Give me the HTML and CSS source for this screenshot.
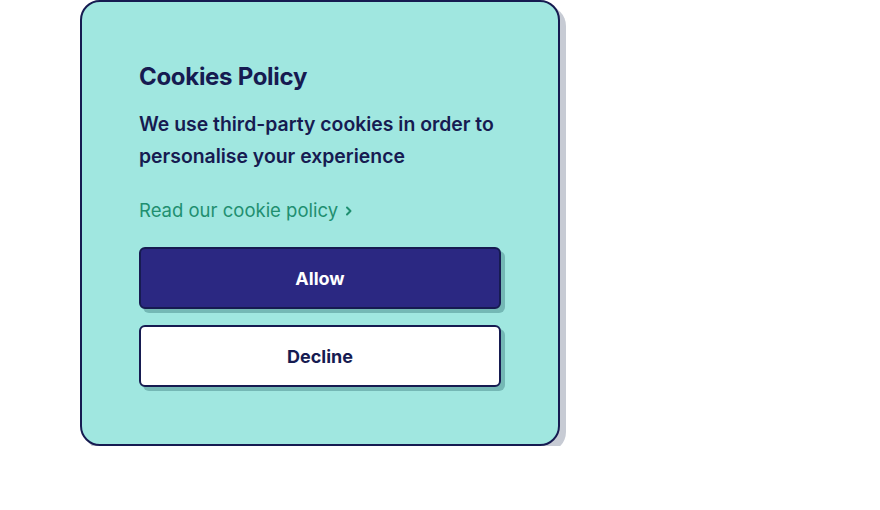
FILE: index.html
```html
<!DOCTYPE html>
<html lang="en">
<head>
<meta charset="utf-8">
<title>Cookies Policy</title>
<link rel="stylesheet" href="styles.css">
</head>
<body>
<div class="page">
  <section class="card">
    <h1 class="title">Cookies Policy</h1>
    <p class="text">We use third-party cookies in order to personalise your experience</p>
    <a class="link" href="#">Read our cookie policy
      <svg class="chev" width="10" height="12" viewBox="0 0 10 12"><path d="M3 2.5 L6.5 6 L3 9.5" fill="none" stroke="currentColor" stroke-width="2" stroke-linecap="round" stroke-linejoin="round"/></svg>
    </a>
    <div class="actions">
      <button class="btn btn-primary">Allow</button>
      <button class="btn btn-secondary">Decline</button>
    </div>
  </section>
</div>
</body>
</html>
```
FILE: styles.css
```css
* { box-sizing: border-box; }
html, body { margin: 0; padding: 0; background: #ffffff; }
body { font-family: Inter, "Noto Sans", sans-serif; color: #161b51; }
.page { padding: 0 0 0 80px; }
.card {
  width: 480px;
  height: 446px;
  background: #a0e7e0;
  border: 2px solid #161b51;
  border-radius: 20px;
  box-shadow: 6px 6px 0 #c7cbd4;
  padding: 59px 57px 56px 57px;
  display: flex;
  flex-direction: column;
}
.title {
  margin: 0;
  font-size: 24px;
  line-height: 32px;
  font-weight: 700;
  letter-spacing: -0.3px;
}
.text {
  margin: 15px 0 0;
  font-size: 19.4px;
  line-height: 32px;
  font-weight: 600;
}
.link {
  margin-top: 24px;
  font-size: 18.5px;
  line-height: 28px;
  color: #1f8f70;
  text-decoration: none;
  display: flex;
  align-items: center;
  gap: 6px;
}
.chev { margin-top: 1px; }
.actions {
  margin-top: 23px;
  display: flex;
  flex-direction: column;
  gap: 16px;
}
.btn {
  width: 362px;
  height: 62px;
  border: 2.5px solid #161b51;
  border-radius: 6px;
  font-family: Inter, "Noto Sans", sans-serif;
  font-size: 18px;
  font-weight: 700;
  box-shadow: 4px 4px 0 #74b8b5;
  cursor: pointer;
}
.btn-primary { background: #2b2882; color: #ffffff; }
.btn-secondary { background: #ffffff; color: #161b51; }
```
